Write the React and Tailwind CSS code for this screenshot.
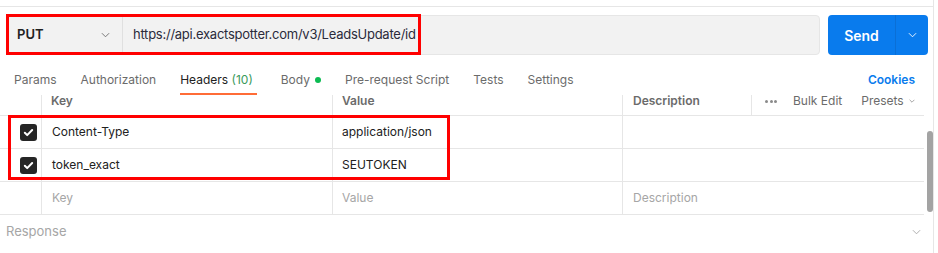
import React from 'react'

const Chevron = ({ className = '' }) => (
    <svg viewBox="0 0 10 6" className={className} fill="none" stroke="currentColor" strokeWidth="1">
        <path d="M1 1l4 4 4-4" />
    </svg>
)

const Check = () => (
    <div className="w-[17px] h-[17px] rounded-[3px] bg-[#262626] flex items-center justify-center">
        <svg viewBox="0 0 12 12" className="w-[11px] h-[11px]" fill="none" stroke="white" strokeWidth="2.2" strokeLinecap="round" strokeLinejoin="round">
            <path d="M2 6.3l2.6 2.6L10 3.3" />
        </svg>
    </div>
)

const tabs = ['Params', 'Authorization', 'Headers', 'Body', 'Pre-request Script', 'Tests', 'Settings']

const Row = ({ check, k, v, d, placeholder }) => (
    <div className="flex h-[33px] border-b border-[#e6e6e6] w-[924px]">
        <div className="w-[42px] border-r border-[#e6e6e6] flex items-center pl-[20px]">
            {check && <Check />}
        </div>
        <div className={`w-[291px] border-r border-[#e6e6e6] flex items-center pl-[10px] ${placeholder ? 'text-[#a6a6a6]' : 'text-[#212121]'}`}>{k}</div>
        <div className={`w-[290px] border-r border-[#e6e6e6] flex items-center pl-[9px] ${placeholder ? 'text-[#a6a6a6]' : 'text-[#212121]'}`}>{v}</div>
        <div className="flex-1 flex items-center pl-[10px] text-[#a6a6a6]">{d}</div>
    </div>
)

export default function App() {
    return (
        <div className="relative w-[938px] h-[253px] bg-white overflow-hidden font-['Inter',sans-serif] text-[12px]">
            <div className="w-[934px] h-[253px] border-r border-[#e6e6e6]">
                <div className="h-[7px] border-b border-[#e6e6e6]" />

                {/* request bar */}
                <div className="flex mt-[8px] pl-[8px] h-[40px]">
                    <div className="w-[812px] flex bg-[#f2f2f2] border border-[#e6e6e6] rounded-[4px]">
                        <div className="w-[114px] flex items-center justify-between pl-[8px] pr-[12px] border-r border-[#e0e0e0]">
                            <span className="font-semibold text-[13px] text-[#212121]">PUT</span>
                            <Chevron className="w-[9px] h-[6px] text-[#6b6b6b]" />
                        </div>
                        <div className="flex items-center pl-[10px] text-[13px] text-[#2b2b3b] tracking-[-0.25px]">https://api.exactspotter.com/v3/LeadsUpdate/id</div>
                    </div>
                    <div className="ml-[8px] w-[100px] flex rounded-[4px] bg-[#097bed] text-white">
                        <div className="w-[68px] flex items-center justify-center font-semibold text-[14px] border-r border-[#0a6fd6]">Send</div>
                        <div className="flex-1 flex items-center justify-center">
                            <Chevron className="w-[9px] h-[6px]" />
                        </div>
                    </div>
                </div>

                {/* tabs */}
                <div className="flex items-start mt-[14px] h-[26px] pl-[14px] pr-[18px]">
                    <div className="flex gap-[24px] text-[#6b6b6b]">
                        {tabs.map((t) => (
                            <div key={t} className={`h-[26px] flex items-start pt-[2px] ${t === 'Headers' ? 'border-b-2 border-[#ff6c37] pr-[4px]' : ''}`}>
                                {t === 'Headers' ? (
                                    <span className="text-[#212121]">Headers <span className="text-[#3a9a5b]">(10)</span></span>
                                ) : t === 'Body' ? (
                                    <span className="flex items-center">Body<span className="ml-[5px] w-[6px] h-[6px] rounded-full bg-[#0cbb52]" /></span>
                                ) : t}
                            </div>
                        ))}
                    </div>
                    <div className="ml-auto pt-[2px] font-semibold text-[#097bed]">Cookies</div>
                </div>

                {/* table header */}
                <div className="flex h-[21px] border-b border-[#e6e6e6] w-[924px] font-semibold text-[#6b6b6b]">
                    <div className="w-[42px] border-r border-[#e6e6e6]" />
                    <div className="w-[291px] border-r border-[#e6e6e6] pl-[9px] leading-[12px]">Key</div>
                    <div className="w-[290px] border-r border-[#e6e6e6] pl-[9px] leading-[12px]">Value</div>
                    <div className="w-[129px] border-r border-[#e6e6e6] pl-[10px] leading-[12px]">Description</div>
                    <div className="flex-1 flex items-start pl-[13px] font-normal leading-[12px] text-[#6b6b6b]">
                        <span className="flex gap-[1.5px] h-[12px] items-center mr-[16px]">
                            <span className="w-[3px] h-[3px] rounded-full bg-[#8a8a8a]" />
                            <span className="w-[3px] h-[3px] rounded-full bg-[#8a8a8a]" />
                            <span className="w-[3px] h-[3px] rounded-full bg-[#8a8a8a]" />
                        </span>
                        <span className="mr-[19px]">Bulk Edit</span>
                        <span className="flex items-center">Presets<Chevron className="ml-[5px] w-[6px] h-[4px]" /></span>
                    </div>
                </div>

                <Row check k="Content-Type" v="application/json" />
                <Row check k="token_exact" v="SEUTOKEN" />
                <Row placeholder k="Key" v="Value" d="Description" />

                <div className="flex items-center justify-between h-[34px] pl-[6px] pr-[12px] text-[13px] text-[#a6a6a6]">
                    <span>Response</span>
                    <Chevron className="w-[9px] h-[6px] text-[#a6a6a6]" />
                </div>
            </div>

            {/* scrollbar */}
            <div className="absolute left-[927px] top-[131px] w-[6px] h-[81px] rounded-full bg-[#a3a3a3]" />

            {/* red highlights */}
            <div className="absolute left-[6px] top-[14px] w-[415px] h-[41px] border-[3px] border-[#ff0000]" />
            <div className="absolute left-[8px] top-[115px] w-[442px] h-[65px] border-[3px] border-[#ff0000]" />
        </div>
    )
}
